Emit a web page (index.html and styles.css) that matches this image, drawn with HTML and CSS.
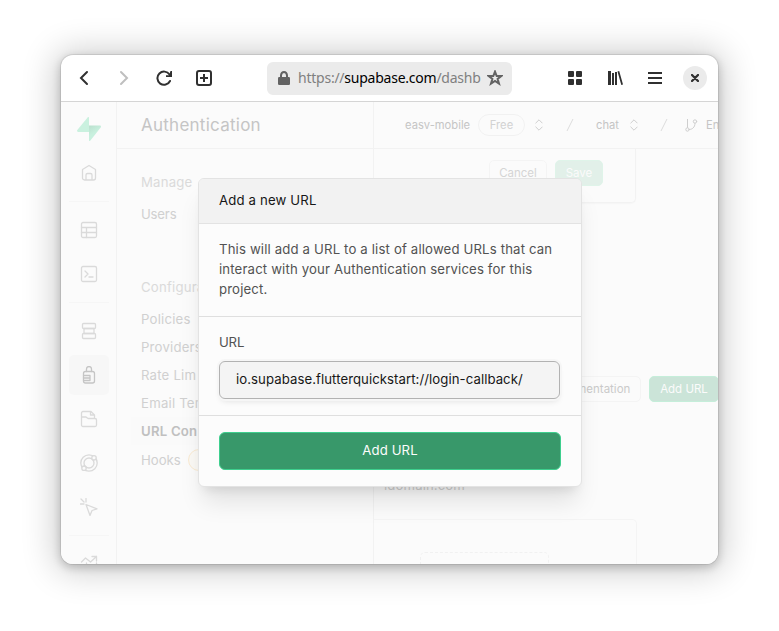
FILE: index.html
```html
<!DOCTYPE html>
<html lang="en">
<head>
<meta charset="utf-8">
<title>Authentication</title>
<link rel="stylesheet" href="styles.css">
</head>
<body>
<div class="window">
  <header class="toolbar">
    <svg class="tool back" viewBox="0 0 16 16"><path d="M11 2 5 8l6 6" fill="none" stroke="currentColor" stroke-width="2" stroke-linecap="round"/></svg>
    <svg class="tool forward" viewBox="0 0 16 16"><path d="M5 2l6 6-6 6" fill="none" stroke="currentColor" stroke-width="2" stroke-linecap="round"/></svg>
    <svg class="tool reload" viewBox="0 0 16 16"><path d="M13.500 4.500A6.600 6.600 0 1 0 14 11" fill="none" stroke="currentColor" stroke-width="2" stroke-linecap="round"/><path d="M16 1v6h-6V5.200h3L14.500 1z" fill="currentColor"/></svg>
    <svg class="tool newtab" viewBox="0 0 16 16"><rect x="1" y="1" width="14" height="14" rx="2" fill="none" stroke="currentColor" stroke-width="2"/><path d="M8 4v8M4 8h8" stroke="currentColor" stroke-width="2"/></svg>
    <div class="address">
      <svg class="lock" viewBox="0 0 12 14"><path d="M3 7V4.500a3 3.500 0 0 1 6 0V7" fill="none" stroke="currentColor" stroke-width="2"/><rect y="6" width="12" height="8" rx="1.200" fill="currentColor"/></svg>
      <div class="url">https://<b>supabase.com</b>/dashb</div>
      <svg class="star" viewBox="0 0 16 16"><path d="M8 1.600 9.700 6h4.600l-3.700 2.900 1.400 4.700L8 10.900l-4 2.700 1.400-4.700L1.700 6h4.600z" fill="none" stroke="currentColor" stroke-width="2"/></svg>
    </div>
    <svg class="tool grid-icon" viewBox="0 0 16 16" fill="currentColor"><rect x="1" y="1" width="6" height="6" rx="1"/><rect x="9" y="1" width="6" height="6" rx="1"/><rect x="1" y="9" width="6" height="6" rx="1"/><rect x="9" y="9" width="6" height="6" rx="1"/></svg>
    <svg class="tool books" viewBox="0 0 16 16" fill="currentColor"><path d="M1 1h3v14H1zM5 3h2v12H5zM8 2h2v13H8zM10.500 1.400l1.700-.4L16 14.500l-1.700.5z"/></svg>
    <svg class="tool menu" viewBox="0 0 16 16" fill="currentColor"><path d="M1 2h14v2H1zM1 7h14v2H1zM1 12h14v2H1z"/></svg>
    <div class="close"><svg viewBox="0 0 8 8"><path d="M1 1l6 6M7 1 1 7" stroke="currentColor" stroke-width="2.300" stroke-linecap="round"/></svg></div>
  </header>
  <div class="page">
    <nav class="rail">
      <div class="cell"><svg class="logo" viewBox="0 0 24 24"><path d="M12 0.600V15H1.200C.2 15-.3 13.900.3 13.100L10.600.4C11.100-.1 12 0 12 .6z" fill="#caf1df"/><path d="M12 23.400V8.500h10.800c1 0 1.500 1.100.9 1.900L13.400 23.600c-.5.600-1.400.4-1.400-.2z" fill="url(#g)"/><defs><linearGradient id="g" x1="12" y1="8" x2="17" y2="16" gradientUnits="userSpaceOnUse"><stop stop-color="#b9dfcd"/><stop offset="1" stop-color="#c8f0de"/></linearGradient></defs></svg></div>
      <div class="cell"><svg class="ico" viewBox="0 0 18 18"><path d="M2.500 5.500 9 1.500l6.500 4V14a2 2 0 0 1-2 2h-9a2 2 0 0 1-2-2zM6 16v-5a1.500 1.500 0 0 1 1.500-1.500h3A1.500 1.500 0 0 1 12 11v5"/></svg></div>
      <hr>
      <div class="cell"><svg class="ico" viewBox="0 0 18 18"><rect x="1.500" y="1.500" width="15" height="15" rx="1.500"/><path d="M1.500 6.500h15M1.500 11.500h15M6.500 6.500v10"/></svg></div>
      <div class="cell"><svg class="ico" viewBox="0 0 18 18"><rect x="1.500" y="1.500" width="15" height="15" rx="1.500"/><path d="M5 6l3 3-3 3M9 12h4"/></svg></div>
      <hr>
      <div class="cell"><svg class="ico" viewBox="0 0 18 18"><rect x="2.500" y="1.500" width="13" height="5" rx="1"/><rect x="4" y="6.500" width="10" height="5"/><rect x="2.500" y="11.500" width="13" height="5" rx="1"/></svg></div>
      <div class="cell active"><svg class="ico" viewBox="0 0 18 18"><rect x="3.500" y="5.500" width="11" height="11.500" rx="2"/><path d="M6.500 5.500V3a2.500 2.500 0 0 1 5 0v2.500M3.500 9.500H10v5H3.500M3.500 12H10"/></svg></div>
      <div class="cell"><svg class="ico" viewBox="0 0 18 18"><path d="M1.500 8V3a1.500 1.500 0 0 1 1.500-1.500h8L14.500 5v3M10.500 1.500V5h4M1.500 7h4.500L8 8.500h7A1.500 1.500 0 0 1 16.500 10v5a1.500 1.500 0 0 1-1.500 1.500H3A1.500 1.500 0 0 1 1.500 15z"/></svg></div>
      <div class="cell"><svg class="ico" viewBox="0 0 18 18"><circle cx="9" cy="9" r="8.200"/><circle cx="9" cy="9" r="5"/><circle cx="14" cy="3.800" r="2.200" fill="#fbfbfb"/><circle cx="4" cy="14.200" r="2.200" fill="#fbfbfb"/></svg></div>
      <div class="cell"><svg class="ico" viewBox="0 0 18 18"><path d="M6 6.500l11 4.300-5 1.700-2 5zM6 .5V4M.5 6H4M1 1l3 3"/></svg></div>
      <hr>
      <div class="cell"><svg class="ico" viewBox="0 0 18 18"><path d="M1.500 7l4-4 5 4 6-5.500M12 1.500h4.500V6M1.500 11v5M6.500 8v8M11.500 10v6M16.500 8v8"/></svg></div>
    </nav>
    <aside class="submenu">
      <h1>Authentication</h1>
      <div class="links">
        <div class="group">Manage</div>
        <a class="first">Users</a>
        <div class="group config">Configura</div>
        <a>Policies</a>
        <a>Providers</a>
        <a>Rate Lim</a>
        <a>Email Tem</a>
        <a class="current">URL Con</a>
        <a class="hooks">Hooks <span class="beta"></span></a>
      </div>
    </aside>
    <main class="main">
      <div class="crumbs">
        <span class="org">easv-mobile</span><span class="plan">Free</span>
        <svg class="updown" viewBox="0 0 8 12"><path d="M.8 4 4 .8 7.200 4M.8 8 4 11.200 7.200 8"/></svg>
        <svg class="slash" viewBox="0 0 8 12"><path d="M1 12 7 0"/></svg>
        <span class="project">chat</span>
        <svg class="updown" viewBox="0 0 8 12"><path d="M.8 4 4 .8 7.200 4M.8 8 4 11.200 7.200 8"/></svg>
        <svg class="slash second" viewBox="0 0 8 12"><path d="M1 12 7 0"/></svg>
        <svg class="branch" viewBox="0 0 13 13"><circle cx="2.500" cy="10.500" r="1.700"/><circle cx="10" cy="2.500" r="1.700"/><path d="M2.500 0v8.500M10 4.500c0 4-3 6-5.500 6"/></svg>
        <span class="enable">En</span>
      </div>
      <div class="form-card"><span class="btn cancel">Cancel</span><span class="btn save">Save</span></div>
      <div class="actions"><span class="btn docs">Documentation</span><span class="btn add">Add URL</span></div>
      <p class="domain">ldomain.com</p>
      <div class="empty-card"><div class="dashed"></div></div>
    </main>
  </div>
  <section class="modal">
    <h2>Add a new URL</h2>
    <p class="description">This will add a URL to a list of allowed URLs that can<br>interact with your Authentication services for this<br>project.</p>
    <div class="field"><label>URL</label><div class="input"><span>io.supabase.flutterquickstart://login-callback/</span></div></div>
    <div class="footer"><button>Add URL</button></div>
  </section>
</div>
</body>
</html>
```
FILE: styles.css
```css
* { box-sizing: border-box; }
body { margin: 0; background: #fff; font-family: Inter, "Liberation Sans", sans-serif; height: 631px; overflow: hidden; }
.window { position: relative; width: 657px; height: 509px; margin: 55px 0 0 61px; border-radius: 12px; background: #fff; box-shadow: 0 0 0 1px rgba(0,0,0,.08), 0 3px 9px 1px rgba(0,0,0,.18), 0 2px 34px 6px rgba(0,0,0,.2); }
.toolbar { height: 47px; display: flex; align-items: center; border-bottom: 1px solid #d5d5d5; color: #303030; padding-left: 15px; }
.tool { width: 16px; height: 16px; flex: none; margin-right: 24px; }
.forward { color: #bfbfbf; }
.newtab { margin-right: 55px; }
.address { width: 245px; height: 33px; border-radius: 6px; background: #ebebeb; display: flex; align-items: center; padding: 0 9px 0 11px; color: #636363; margin-right: 55px; }
.lock { width: 12px; height: 14px; flex: none; margin-right: 8px; }
.url { font: 14px/20px "Noto Sans", sans-serif; letter-spacing: -.24px; color: #808080; width: 183px; padding-bottom: 1px; overflow: hidden; white-space: nowrap; }
.url b { font-weight: 400; color: #000; }
.star { width: 16px; height: 16px; flex: none; margin-left: 6px; }
.menu { margin-right: 20px; }
.close { width: 24px; height: 24px; border-radius: 50%; background: #ebebeb; display: grid; place-items: center; }
.close svg { width: 8px; height: 8px; }
.page { height: 462px; display: flex; overflow: hidden; background: #fbfbfb; border-radius: 0 0 12px 12px; }
.rail { width: 56px; flex: none; border-right: 1px solid #f2f2f2; display: flex; flex-direction: column; align-items: center; gap: 4px; padding-top: 7px; }
.cell { width: 40px; height: 40px; flex: none; border-radius: 5px; display: grid; place-items: center; color: #dadada; }
.active { background: #f7f7f7; color: #c5c5c5; }
.logo { width: 24px; height: 24px; }
.ico { width: 18px; height: 18px; fill: none; stroke: currentColor; stroke-width: 1.3; stroke-linejoin: round; stroke-linecap: round; }
.rail hr { width: 40px; height: 1px; flex: none; border: 0; margin: 4px 0; background: #f6f6f6; }
.submenu { width: 257px; flex: none; border-right: 1px solid #f2f2f2; color: #d0d0d0; }
h1 { margin: 0; height: 47px; padding-left: 24px; border-bottom: 1px solid #f2f2f2; font-weight: 400; font-size: 17px; letter-spacing: .25px; line-height: 46px; color: #c5c5c5; }
.links { padding: 19px 0 0 24px; font-size: 13.200px; letter-spacing: .2px; white-space: nowrap; }
.links a, .group { display: block; height: 28px; line-height: 28px; }
.links .first { margin-top: 4px; letter-spacing: -.2px; }
.group { color: #dadada; }
.config { margin: 45px 0 4px; }
.links .current { font-weight: 600; color: #c0c0c0; margin-left: -10px; padding-left: 10px; background: #fafafa; }
.links .hooks { display: flex; align-items: center; margin-top: 1px; letter-spacing: 0; }
.beta { width: 60px; height: 22px; border: 1px solid #faebd3; background: #fbf9f5; border-radius: 11px; margin-left: 7px; }
.main { flex: 1; min-width: 0; overflow: hidden; }
.crumbs { height: 47px; border-bottom: 1px solid #f2f2f2; display: flex; align-items: center; padding-left: 31px; font-size: 11.200px; color: #c5c5c5; white-space: nowrap; }
.crumbs > * { flex: none; }
.plan { width: 47px; height: 22px; border: 1px solid #f1f1f1; border-radius: 11px; text-align: center; line-height: 20px; color: #d2d2d2; margin: 0 10px 0 8px; }
.org { width: 65px; }
.crumbs svg { fill: none; stroke: #cecece; stroke-linecap: round; }
.updown { width: 8px; height: 12px; }
.crumbs .slash { width: 8px; height: 12px; margin: 0 22px 0 23px; stroke: #dcdcdc; }
.project { width: 25px; margin-right: 9px; }
.crumbs .second { margin: 0 17px 0 22px; }
.branch { width: 13px; height: 13px; margin-right: 8px; }
.form-card { width: 262px; height: 54px; border: solid #f2f2f2; border-width: 0 1px 1px 0; border-radius: 0 0 5px 0; box-shadow: 0 1px 1px #f6f6f6; padding: 11px 32px 0 0; display: flex; justify-content: flex-end; gap: 8px; }
.btn { height: 26px; border: 1px solid #f4f4f4; border-radius: 5px; font-size: 11.500px; line-height: 24px; text-align: center; color: #d5d5d5; flex: none; }
.cancel { width: 58px; }
.save { width: 48px; background: #e2f0e9; border-color: #dff4e9; color: #fbfbfb; }
.actions { width: 345px; margin-top: 173px; display: flex; justify-content: flex-end; gap: 8px; }
.docs { width: 106px; color: #cacaca; padding-left: 2px; }
.add { width: 70px; background: #cbe4d8; border-color: #c5eeda; color: #fbfbfb; }
.domain { margin: 73px 0 0 10px; font-size: 13.200px; line-height: 20px; color: #d0d0d0; letter-spacing: .1px; }
.empty-card { width: 263px; height: 70px; margin-top: 24px; border: 1px solid #f4f4f4; border-left: 0; border-radius: 0 5px 0 0; padding: 32px 0 0 46px; }
.dashed { width: 129px; height: 60px; border: 1px dashed #f1f1f1; border-radius: 5px; }
.modal { position: absolute; left: 137px; top: 123px; width: 384px; height: 309px; background: #fcfcfc; border: 1px solid #e3e3e3; border-radius: 6px; overflow: hidden; box-shadow: 0 20px 25px -5px rgba(0,0,0,.1), 0 8px 10px -6px rgba(0,0,0,.1); font-size: 13.200px; letter-spacing: .15px; color: #525252; }
h2 { margin: 0; height: 45px; border-bottom: 1px solid #e3e3e3; background: #f2f2f2; padding-left: 20px; font-size: 13.200px; line-height: 42px; font-weight: 400; color: #171717; }
.description { margin: 0; padding: 15px 0 17px 20px; height: 93px; border-bottom: 1px solid #dfdfdf; line-height: 20px; white-space: nowrap; }
.field { height: 99px; padding: 15px 21px 0 20px; border-bottom: 1px solid #dfdfdf; }
label { display: block; line-height: 20px; letter-spacing: -.2px; }
.input { height: 38px; margin-top: 9px; border: 1px solid #b2b2b2; border-radius: 6px; background: #f4f4f4; color: #171717; line-height: 35px; letter-spacing: .06px; padding-left: 16px; white-space: nowrap; box-shadow: 0 0 0 2px #f6f6f6, 0 4px 6px -2px rgba(0,0,0,.12); }
.footer { padding: 16px 20px 0; }
button { display: block; width: 342px; height: 38px; border: 1px solid #3ecf8e; border-radius: 6px; background: #38986a; color: #fcfcfc; font: 13.200px Inter, sans-serif; letter-spacing: .1px; padding: 0 0 2px; }
```
